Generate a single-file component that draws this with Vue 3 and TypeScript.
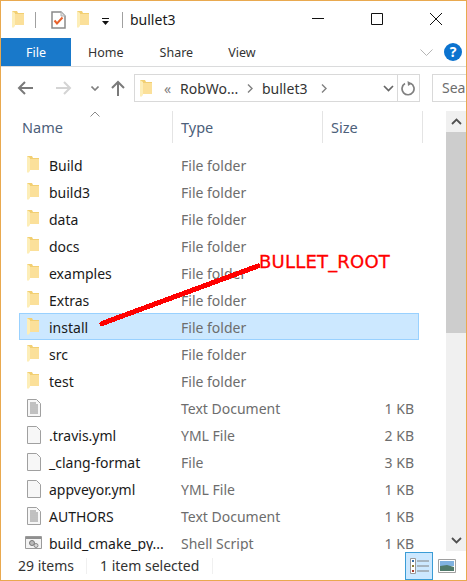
<script setup lang="ts">
type Kind = 'folder' | 'blank' | 'text' | 'script'
interface Row {
  name: string
  type: string
  size: string
  icon: Kind
  selected?: boolean
}

const folders = ['Build', 'build3', 'data', 'docs', 'examples', 'Extras', 'install', 'src', 'test']

const rows: Row[] = [
  ...folders.map((name): Row => ({
    name,
    type: 'File folder',
    size: '',
    icon: 'folder',
    selected: name === 'install',
  })),
  { name: '', type: 'Text Document', size: '1 KB', icon: 'text' },
  { name: '.travis.yml', type: 'YML File', size: '2 KB', icon: 'blank' },
  { name: '_clang-format', type: 'File', size: '3 KB', icon: 'blank' },
  { name: 'appveyor.yml', type: 'YML File', size: '1 KB', icon: 'blank' },
  { name: 'AUTHORS', type: 'Text Document', size: '1 KB', icon: 'text' },
  { name: 'build_cmake_py...', type: 'Shell Script', size: '1 KB', icon: 'script' },
]
</script>

<template>
  <div class="window">
    <div class="titlebar">
      <svg class="folder" viewBox="0 0 12 17"><path d="M0 0h5l1 2h6v12H0z" fill="#f2cf72" /><path d="M3 3h9v11H3z" fill="#fbe09a" /><path d="M0 0l3 2v13l-2 2-1-1z" fill="#fdeeb8" /></svg>
      <i class="bar first"></i>
      <svg class="check" viewBox="0 0 15 18"><path d="M1 1h9l4 4v12H1z" fill="#fff" stroke="#8a8a8a" stroke-width="1.500" /><path d="M10 1v4h4" fill="#e2e2e2" stroke="#b0b0b0" /><path d="M3.500 9.500l2.500 3 5.500-6" fill="none" stroke="#e8622c" stroke-width="2" /></svg>
      <svg class="folder qa2" viewBox="0 0 12 17"><path d="M0 0h5l1 2h6v12H0z" fill="#f2cf72" /><path d="M3 3h9v11H3z" fill="#fbe09a" /><path d="M0 0l3 2v13l-2 2-1-1z" fill="#fdeeb8" /></svg>
      <svg class="drop" viewBox="0 0 7 7"><path d="M0 0h7v1H0zM0 3h7L3.500 7z" fill="#111" /></svg>
      <i class="bar second"></i>
      <span class="title">bullet3</span>
      <div class="controls">
        <svg viewBox="0 0 12 12" class="ctl"><path d="M0 5.500h12" stroke="#111" /></svg>
        <svg viewBox="0 0 12 12" class="ctl"><path d="M.5.500h11v11H.500z" fill="none" stroke="#111" /></svg>
        <svg viewBox="0 0 12 12" class="ctl"><path d="M0 0l12 12M12 0L0 12" stroke="#111" /></svg>
      </div>
    </div>

    <div class="ribbon">
      <div class="tab file">File</div>
      <div class="tab home">Home</div>
      <div class="tab share">Share</div>
      <div class="tab view">View</div>
      <svg class="collapse" viewBox="0 0 13 7"><path d="M.5.500l6 6 6-6" fill="none" stroke="#b5b5b5" /></svg>
      <div class="help">?</div>
    </div>

    <div class="nav">
      <svg class="arrow back" viewBox="0 0 16 14"><path d="M16 7H2M8 1L2 7l6 6" fill="none" stroke="#7a7a7a" stroke-width="2" /></svg>
      <svg class="arrow fwd" viewBox="0 0 16 14"><path d="M0 7h14M8 1l6 6-6 6" fill="none" stroke="#d4d4d4" stroke-width="2" /></svg>
      <svg class="recent" viewBox="0 0 8 5"><path d="M.5.500L4 4 7.500.500" fill="none" stroke="#808080" stroke-width="1.600" /></svg>
      <svg class="arrow up" viewBox="0 0 14 16"><path d="M7 16V2M1 8l6-6 6 6" fill="none" stroke="#7a7a7a" stroke-width="2" /></svg>
      <div class="address">
        <svg class="folder" viewBox="0 0 12 17"><path d="M0 0h5l1 2h6v12H0z" fill="#f2cf72" /><path d="M3 3h9v11H3z" fill="#fbe09a" /><path d="M0 0l3 2v13l-2 2-1-1z" fill="#fdeeb8" /></svg>
        <span class="crumb-more">«</span>
        <span class="crumb robwo">RobWo...</span>
        <svg class="sep-chev" viewBox="0 0 6 9"><path d="M1 .5l4 4-4 4" fill="none" stroke="#808080" stroke-width="1.400" /></svg>
        <span class="crumb bullet">bullet3</span>
        <svg class="sep-chev" viewBox="0 0 6 9"><path d="M1 .5l4 4-4 4" fill="none" stroke="#808080" stroke-width="1.400" /></svg>
        <svg class="addr-drop" viewBox="0 0 11 7"><path d="M1 1l4.500 4.500L10 1" fill="none" stroke="#666" stroke-width="1.700" /></svg>
        <div class="refresh">
          <svg viewBox="0 0 15 15"><path d="M9.500 2.300A6 6 0 1 1 4 2.600" fill="none" stroke="#808080" stroke-width="1.700" /><path d="M6.500 0l4.500 2.500-4 2.500z" fill="#808080" /></svg>
        </div>
      </div>
      <div class="search">Sea</div>
    </div>

    <div class="content">
      <div class="files">
        <div class="head">
          <svg class="sort" viewBox="0 0 10 6"><path d="M.5 5.500L5 1l4.500 4.500" fill="none" stroke="#8a8a8a" /></svg>
          <div class="col c-name">Name</div>
          <div class="col c-type">Type</div>
          <div class="col c-size">Size</div>
        </div>
        <div class="list">
          <div v-for="row in rows" :key="row.name + row.type" class="row" :class="{ selected: row.selected }">
            <div class="ico">
              <svg v-if="row.icon === 'folder'" class="folder" viewBox="0 0 12 17"><path d="M0 0h5l1 2h6v12H0z" fill="#f2cf72" /><path d="M3 3h9v11H3z" fill="#fbe09a" /><path d="M0 0l3 2v13l-2 2-1-1z" fill="#fdeeb8" /></svg>
              <svg v-else-if="row.icon === 'script'" class="script" viewBox="0 0 17 13"><path d="M.5.500h16v12H.500z" fill="#f3f3f3" stroke="#9a9a9a" /><path d="M1 1h15v2H1z" fill="#8f8f8f" /><circle cx="7" cy="7" r="2.500" fill="#b9b9b9" stroke="#777" /><circle cx="11" cy="9.500" r="2" fill="#d8d8d8" stroke="#888" /></svg>
              <svg v-else class="doc" viewBox="0 0 14 18">
                <path d="M.5.500h9l4 4v13H.500z" fill="#f7f7f7" stroke="#a0a0a0" />
                <path v-if="row.icon === 'text'" d="M3 4h6M3 6h8M3 8h8M3 10h8M3 12h8M3 14h8" stroke="#8a8a8a" />
              </svg>
            </div>
            <div class="name">{{ row.name }}</div>
            <div class="type">{{ row.type }}</div>
            <div class="size">{{ row.size }}</div>
          </div>
        </div>
      </div>
      <div class="scrollbar">
        <div class="sb-btn"><svg viewBox="0 0 11 7"><path d="M1 6l4.500-4.500L10 6" fill="none" stroke="#505050" stroke-width="1.800" /></svg></div>
        <div class="sb-thumb"></div>
        <div class="sb-track"></div>
        <div class="sb-btn"><svg viewBox="0 0 11 7"><path d="M1 1l4.500 4.500L10 1" fill="none" stroke="#505050" stroke-width="1.800" /></svg></div>
      </div>
    </div>

    <div class="status">
      <span class="st-items">29 items</span>
      <i class="st-sep"></i>
      <span class="st-sel">1 item selected</span>
      <i class="st-sep"></i>
      <div class="views">
        <div class="view-btn on">
          <svg viewBox="0 0 19 16"><path d="M.500.500h5v15h-5z" fill="#fff" stroke="#999" /><path d="M2 2h2v2H2z" fill="#3a6ea5" /><path d="M2 7h2v2H2z" fill="#8a7a30" /><path d="M2 12h2v2H2z" fill="#a83a2a" /><path d="M7 3h12M7 8h12M7 13h12" stroke="#808080" /></svg>
        </div>
        <div class="view-btn thumb">
          <svg viewBox="0 0 18 14"><path d="M.500.500h17v13H.500z" fill="#fff" stroke="#a0a0a0" /><path d="M2 2h14v5H2z" fill="#7fb2e0" /><path d="M2 7l7-1 7 2v4H2z" fill="#4f7a6a" /></svg>
        </div>
      </div>
    </div>

    <svg class="annotation" viewBox="0 0 467 581" shape-rendering="crispEdges"><path d="M102 323.500L258 266" stroke="#f00" stroke-width="5" stroke-linecap="round" /></svg>
    <div class="label">BULLET_ROOT</div>
  </div>
</template>

<style>
html,
body {
  margin: 0;
  background: #fff;
}
</style>

<style scoped>
.window {
  position: relative;
  box-sizing: border-box;
  width: 467px;
  height: 581px;
  border: 1px solid #e9a94f;
  display: flex;
  flex-direction: column;
  overflow: hidden;
  background: #fff;
  font-family: "Noto Sans", "Open Sans", sans-serif;
  font-size: 14px;
  color: #1a1a1a;
}
svg {
  display: block;
  flex: none;
}
.folder {
  width: 12px;
  height: 17px;
}

/* title bar */
.titlebar {
  height: 37px;
  flex: none;
  display: flex;
  align-items: center;
  padding-left: 11px;
}
.bar {
  width: 1px;
  height: 16px;
  background: #a0a0a0;
}
.bar.first {
  margin-left: 11px;
}
.check {
  width: 15px;
  height: 18px;
  margin-left: 15px;
}
.qa2 {
  margin-left: 11px;
}
.drop {
  width: 7px;
  height: 7px;
  margin-left: 13px;
  margin-top: 3px;
}
.bar.second {
  margin-left: 13px;
}
.title {
  margin-left: 7px;
  font-size: 14px;
}
.controls {
  margin-left: auto;
  margin-right: 24px;
  margin-top: -2px;
  display: flex;
  gap: 47px;
}
.ctl {
  width: 12px;
  height: 12px;
}

/* ribbon */
.ribbon {
  height: 29px;
  flex: none;
  box-sizing: border-box;
  border-bottom: 1px solid #dadbdc;
  display: flex;
  align-items: stretch;
  font-size: 12.500px;
  color: #333;
}
.tab {
  display: flex;
  align-items: center;
  justify-content: center;
  height: 28px;
}
.tab.file {
  width: 70px;
  background: #1979ca;
  color: #fff;
}
.tab.home {
  margin-left: 17px;
}
.tab.share {
  margin-left: 36px;
}
.tab.view {
  margin-left: 35px;
}
.collapse {
  width: 13px;
  height: 7px;
  margin: 11px 0 0 auto;
}
.help {
  width: 18px;
  height: 18px;
  margin: 5px 4px 0 11px;
  border-radius: 50%;
  background: #0c73cf;
  color: #fff;
  font-size: 14px;
  font-weight: 700;
  line-height: 18px;
  text-align: center;
}

/* nav */
.nav {
  height: 42px;
  flex: none;
  display: flex;
  align-items: center;
  padding-left: 16px;
}
.arrow.back,
.arrow.fwd {
  width: 16px;
  height: 14px;
}
.arrow.fwd {
  margin-left: 23px;
}
.recent {
  width: 8px;
  height: 5px;
  margin-left: 19px;
}
.arrow.up {
  width: 14px;
  height: 16px;
  margin-left: 12px;
}
.address {
  box-sizing: border-box;
  width: 286px;
  height: 28px;
  margin-left: 9px;
  border: 1px solid #d9d9d9;
  display: flex;
  align-items: center;
  padding-left: 5px;
  flex: none;
}
.crumb-more {
  margin-left: 12px;
  width: 9px;
  color: #808080;
  font-size: 14px;
}
.crumb {
  font-size: 14px;
  color: #333;
}
.robwo {
  margin-left: 7px;
  width: 67px;
}
.bullet {
  width: 59px;
  margin-left: 9px;
}
.sep-chev {
  width: 6px;
  height: 9px;
}
.addr-drop {
  width: 11px;
  height: 7px;
  margin-left: auto;
  margin-right: 3px;
}
.refresh {
  width: 21px;
  height: 26px;
  border-left: 1px solid #d9d9d9;
  display: flex;
  align-items: center;
  justify-content: center;
}
.refresh svg {
  width: 15px;
  height: 15px;
}
.search {
  box-sizing: border-box;
  height: 28px;
  width: 120px;
  margin-left: 12px;
  flex: none;
  border: 1px solid #d9d9d9;
  padding-left: 9px;
  line-height: 26px;
  color: #6d6d6d;
  white-space: nowrap;
}

/* file list */
.content {
  flex: 1;
  min-height: 0;
  display: flex;
  overflow: hidden;
  margin-top: 2px;
}
.files {
  flex: 1;
  min-width: 0;
}
.head {
  position: relative;
  height: 32px;
  display: grid;
  grid-template-columns: 172px 150px 100px;
  color: #4c607a;
  font-size: 14.500px;
}
.sort {
  position: absolute;
  left: 89px;
  top: 0;
  width: 10px;
  height: 6px;
}
.col {
  box-sizing: border-box;
  height: 32px;
  padding: 6px 0 0 8px;
  border-right: 1px solid #e4e4e4;
}
.c-name {
  padding-left: 21px;
}
.list {
  padding-top: 8px;
}
.row {
  box-sizing: border-box;
  width: 400px;
  height: 27px;
  margin-left: 18px;
  padding-top: 2px;
  border: 1px solid transparent;
  display: grid;
  grid-template-columns: 29px 132px 150px 1fr;
  align-items: center;
  line-height: 14px;
  white-space: nowrap;
}
.row.selected {
  background: #cce8ff;
  border-color: #99d1ff;
}
.ico {
  display: flex;
  justify-content: flex-start;
  padding-left: 7px;
  margin-top: -2px;
}
.doc {
  width: 14px;
  height: 18px;
}
.script {
  width: 17px;
  height: 13px;
  margin-left: -2px;
}
.name {
  color: #1a1a1a;
}
.type {
  color: #6d6d6d;
}
.size {
  color: #6d6d6d;
  text-align: right;
  padding-right: 4px;
}

/* scrollbar */
.scrollbar {
  width: 20px;
  flex: none;
  display: flex;
  flex-direction: column;
  background: #f0f0f0;
}
.sb-btn {
  height: 21px;
  flex: none;
  display: flex;
  align-items: center;
  justify-content: center;
}
.sb-btn svg {
  width: 11px;
  height: 7px;
}
.sb-thumb {
  height: 201px;
  flex: none;
  background: #cdcdcd;
}
.sb-track {
  flex: 1;
}

/* status bar */
.status {
  height: 29px;
  flex: none;
  display: flex;
  align-items: center;
  font-size: 14px;
  color: #333;
}
.st-items {
  margin-left: 17px;
  width: 68px;
}
.st-sel {
  margin-left: 13px;
  width: 112px;
}
.st-sep {
  width: 1px;
  height: 16px;
  background: #f0f0f0;
}
.views {
  margin-left: auto;
  margin-right: 10px;
  display: flex;
  align-items: center;
  gap: 5px;
}
.view-btn {
  box-sizing: border-box;
  width: 28px;
  height: 28px;
  display: flex;
  align-items: center;
  justify-content: center;
}
.view-btn.thumb {
  width: 18px;
}
.view-btn.on {
  background: #cce8ff;
  border: 1px solid #3a9cd6;
}
.view-btn svg {
  width: 18px;
  height: 14px;
}
.view-btn.on svg {
  width: 19px;
  height: 16px;
}

/* red hand drawn note on top of the screenshot */
.annotation {
  position: absolute;
  left: -1px;
  top: -1px;
  width: 467px;
  height: 581px;
  pointer-events: none;
}
.label {
  position: absolute;
  left: 258px;
  top: 250px;
  color: #f00;
  font-family: "DejaVu Sans", sans-serif;
  font-size: 18px;
  line-height: 22px;
  letter-spacing: 0.2px;
  -webkit-text-stroke: 0.3px #f00;
  white-space: nowrap;
}
</style>
